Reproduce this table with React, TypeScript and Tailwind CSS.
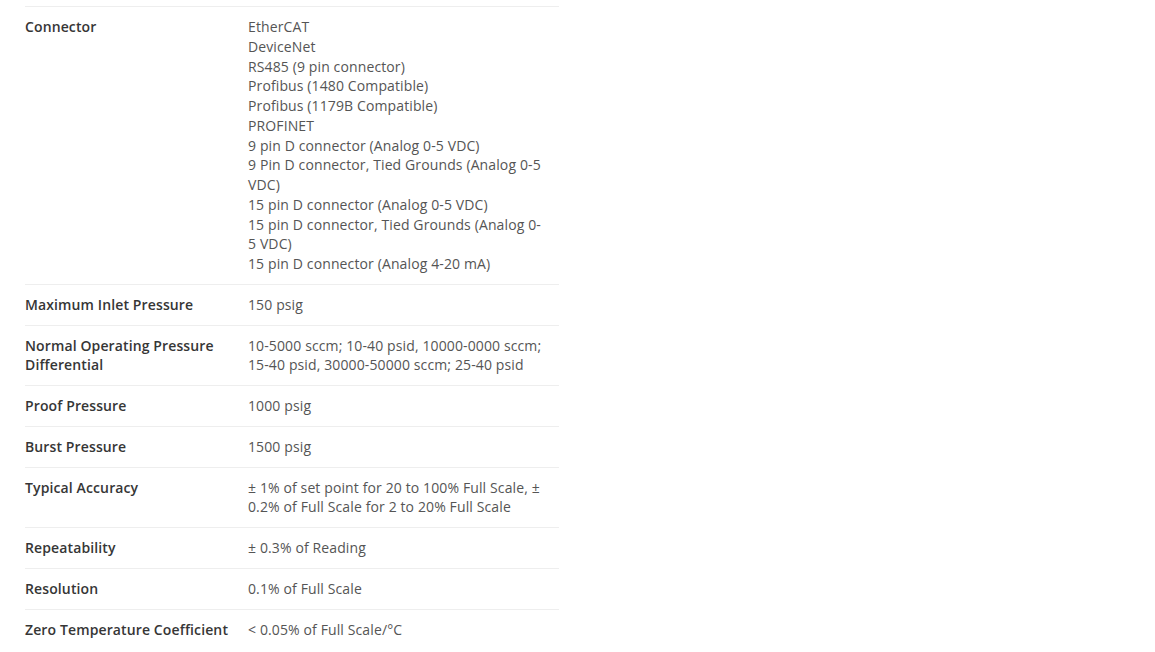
const specs: { label: string; value: string[] }[] = [
  {
    label: "Connector",
    value: [
      "EtherCAT",
      "DeviceNet",
      "RS485 (9 pin connector)",
      "Profibus (1480 Compatible)",
      "Profibus (1179B Compatible)",
      "PROFINET",
      "9 pin D connector (Analog 0-5 VDC)",
      "9 Pin D connector, Tied Grounds (Analog 0-5 VDC)",
      "15 pin D connector (Analog 0-5 VDC)",
      "15 pin D connector, Tied Grounds (Analog 0-5 VDC)",
      "15 pin D connector (Analog 4-20 mA)",
    ],
  },
  { label: "Maximum Inlet Pressure", value: ["150 psig"] },
  {
    label: "Normal Operating Pressure Differential",
    value: ["10-5000 sccm; 10-40 psid, 10000-0000 sccm; 15-40 psid, 30000-50000 sccm; 25-40 psid"],
  },
  { label: "Proof Pressure", value: ["1000 psig"] },
  { label: "Burst Pressure", value: ["1500 psig"] },
  {
    label: "Typical Accuracy",
    value: ["± 1% of set point for 20 to 100% Full Scale, ± 0.2% of Full Scale for 2 to 20% Full Scale"],
  },
  { label: "Repeatability", value: ["± 0.3% of Reading"] },
  { label: "Resolution", value: ["0.1% of Full Scale"] },
  { label: "Zero Temperature Coefficient", value: ["< 0.05% of Full Scale/°C"] },
];

export default function App() {
  return (
    <div className="min-h-[652px] bg-white pt-[6px] pl-[25px] font-['Open_Sans',sans-serif] text-[14px] leading-[19.75px] tracking-[0.12px]">
      <div className="w-[534px]">
        {specs.map((row) => (
          <div key={row.label} className="grid grid-cols-[223px_1fr] border-t border-[#eeeeee] py-[10px]">
            <div className="pr-[10px] font-semibold text-[#363636]">{row.label}</div>
            <div className="pr-[10px] text-[#555555]">
              {row.value.map((line) => (
                <div key={line}>{line}</div>
              ))}
            </div>
          </div>
        ))}
      </div>
    </div>
  );
}
